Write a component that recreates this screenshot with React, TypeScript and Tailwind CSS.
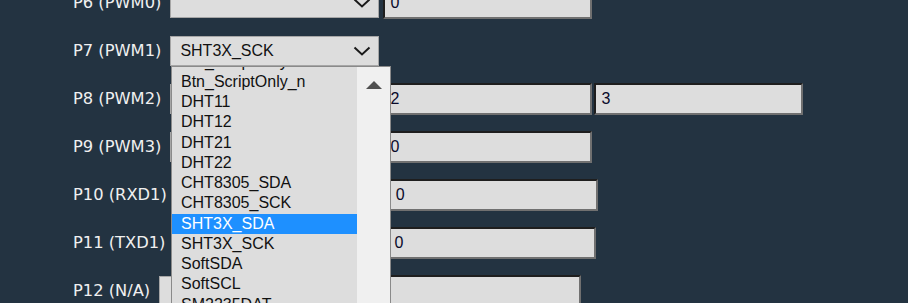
const labelFont = { fontFamily: '"DejaVu Sans", Verdana, sans-serif' };

type Row = { label: string; select?: string; inputs: string[] };

const rows: Row[] = [
  { label: "P6 (PWM0)", select: "", inputs: ["0"] },
  { label: "P7 (PWM1)", select: "SHT3X_SCK", inputs: [] },
  { label: "P8 (PWM2)", select: "", inputs: ["2", "3"] },
  { label: "P9 (PWM3)", select: "", inputs: ["0"] },
  { label: "P10 (RXD1)", select: "", inputs: ["0"] },
  { label: "P11 (TXD1)", select: "", inputs: ["0"] },
  { label: "P12 (N/A)", select: "", inputs: [""] },
];

const options = [
  "Btn_ScriptOnly",
  "Btn_ScriptOnly_n",
  "DHT11",
  "DHT12",
  "DHT21",
  "DHT22",
  "CHT8305_SDA",
  "CHT8305_SCK",
  "SHT3X_SDA",
  "SHT3X_SCK",
  "SoftSDA",
  "SoftSCL",
  "SM2235DAT",
  "SM2235CLK",
];

function Chevron() {
  return (
    <svg width="18" height="10" viewBox="0 0 18 10" className="shrink-0">
      <path d="M1.5 1.5 L9 8.5 L16.5 1.5" fill="none" stroke="#1a1a1a" strokeWidth="2" />
    </svg>
  );
}

function FakeSelect({ value }: { value: string }) {
  return (
    <div className="flex h-[30px] w-[209px] shrink-0 items-center justify-between border border-[#a6a6a6] bg-[#dddddd] pl-[9px] pr-[7px] text-[16px] text-[#111]">
      <span>{value}</span>
      <Chevron />
    </div>
  );
}

function FakeInput({ value }: { value: string }) {
  return (
    <div className="flex h-[32px] w-[209px] shrink-0 items-center border-2 border-t-[#1e1e1e] border-l-[#1e1e1e] border-r-[#707070] border-b-[#707070] bg-[#dddddd] px-[5px] text-[16px] text-[#0a0a2a]">
      {value}
    </div>
  );
}

export default function App() {
  return (
    <div
      className="relative h-[303px] w-[908px] overflow-hidden bg-[#233341]"
      style={{ fontFamily: '"Liberation Sans", Arial, sans-serif' }}
    >
      <div className="-mt-[21px] flex flex-col pl-[73px]">
        {rows.map((r) => (
          <div key={r.label} className="flex h-[48px] items-center">
            <span className="mr-[9px] text-[16.3px] text-[#f0f0f0]" style={labelFont}>
              {r.label}
            </span>
            <FakeSelect value={r.select ?? ""} />
            <div className="ml-[4px] flex gap-[2px]">
              {r.inputs.map((v, i) => (
                <FakeInput key={i} value={v} />
              ))}
            </div>
          </div>
        ))}
      </div>

      <div className="absolute left-[171px] top-[66px] flex h-[260px] w-[220px] border border-[#8a8a8a] bg-[#dddddd]">
        <div className="flex-1 overflow-hidden">
          <div className="-mt-[15.5px]">
            {options.map((o) => (
              <div
                key={o}
                className={`h-[20.25px] pl-[9px] text-[16px] leading-[20.25px] ${
                  o === "SHT3X_SDA" ? "bg-[#1e90ff] text-white" : "text-[#111]"
                }`}
              >
                {o}
              </div>
            ))}
          </div>
        </div>
        <div className="flex w-[33px] justify-center bg-[#f0f0f0] pt-[14px]">
          <svg width="16" height="8" viewBox="0 0 16 8">
            <path d="M8 0 L16 8 L0 8 Z" fill="#505050" />
          </svg>
        </div>
      </div>
    </div>
  );
}
